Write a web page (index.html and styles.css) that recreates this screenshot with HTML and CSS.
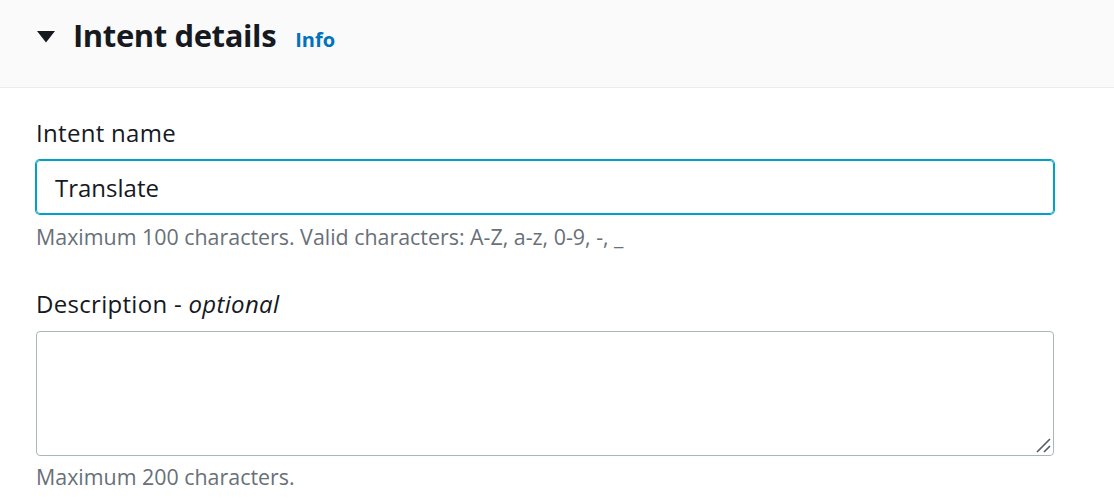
FILE: index.html
```html
<!DOCTYPE html>
<html>
<head>
<meta charset="utf-8">
<link rel="stylesheet" href="styles.css">
</head>
<body>
<div class="panel">
  <div class="header">
    <svg class="caret" width="18" height="12" viewBox="0 0 18 12"><path d="M0 0 H18 L9 11.5 Z" fill="#16191f"/></svg>
    <h2 class="title">Intent details</h2>
    <a class="info">Info</a>
  </div>
  <div class="body">
    <div class="field">
      <label class="label">Intent name</label>
      <div class="input focused">Translate</div>
      <div class="hint">Maximum 100 characters. Valid characters: A-Z, a-z, 0-9, -, _</div>
    </div>
    <div class="field">
      <label class="label">Description - <i>optional</i></label>
      <div class="textarea">
        <svg class="grip" width="15" height="15" viewBox="0 0 15 15"><path d="M1 14 L14 1 M8 14 L14 8" stroke="#545b64" stroke-width="1.6"/></svg>
      </div>
      <div class="hint hint-after-area">Maximum 200 characters.</div>
    </div>
  </div>
</div>
</body>
</html>
```
FILE: styles.css
```css
html, body {
  margin: 0;
  padding: 0;
  background: #fff;
  font-family: "Open Sans", "Noto Sans", sans-serif;
  color: #16191f;
}
.panel {
  width: 1114px;
}
.header {
  height: 88px;
  box-sizing: border-box;
  background: #fafafa;
  border-bottom: 1px solid #eaeded;
  display: flex;
  align-items: baseline;
  padding: 15px 0 0 37px;
}
.caret {
  align-self: flex-start;
  margin-top: 16px;
  margin-right: 18px;
}
.title {
  margin: 0;
  font-size: 31px;
  line-height: 40px;
  font-weight: 700;
  letter-spacing: -0.4px;
}
.info {
  margin-left: 19px;
  color: #0073bb;
  font-weight: 700;
  font-size: 20px;
}
.body {
  padding: 29px 0 0 36px;
}
.field {
  width: 1018px;
  display: flex;
  flex-direction: column;
  margin-bottom: 38px;
}
.field:last-child {
  margin-bottom: 0;
}
.label {
  font-size: 24px;
  line-height: 32px;
  letter-spacing: 0.3px;
  margin-bottom: 11px;
}
.label i {
  font-style: italic;
}
.input {
  height: 54px;
  box-sizing: border-box;
  border: 1px solid #00a1c9;
  box-shadow: 0 0 0 1px #00a1c9;
  border-radius: 4px;
  padding-left: 18px;
  display: flex;
  align-items: center;
  font-size: 24px;
}
.textarea {
  height: 125px;
  box-sizing: border-box;
  border: 1px solid #aab7b8;
  border-radius: 4px;
  position: relative;
}
.grip {
  position: absolute;
  right: 2px;
  bottom: 2px;
}
.hint {
  margin-top: 10px;
  font-size: 21.4px;
  line-height: 26px;
  color: #687078;
}
.hint-after-area {
  margin-top: 8px;
}
```
